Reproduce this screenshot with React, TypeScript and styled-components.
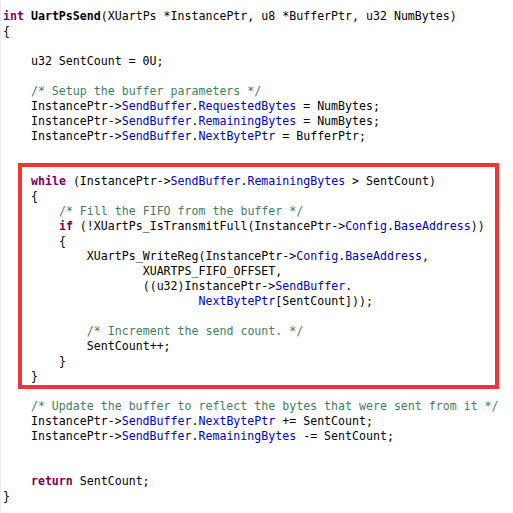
import React from "react";
import styled, { createGlobalStyle } from "styled-components";

const Global = createGlobalStyle`
  html, body { margin: 0; padding: 0; background: #ffffff; }
  #root { width: 513px; height: 513px; }
`;

const Page = styled.div`
  box-sizing: border-box;
  width: 513px;
  height: 513px;
  background: #ffffff;
  border-left: 1px solid #ececec;
  padding: 9px 0 0 2px;
  font-family: "DejaVu Sans Mono", "Liberation Mono", monospace;
  font-size: 11.6px;
  line-height: 15px;
  color: #000000;
  overflow: hidden;
`;

const Line = styled.div`
  height: 15px;
  white-space: pre;
`;

const Highlight = styled.div`
  box-sizing: border-box;
  width: 481px;
  margin: 4px 0 10px 15px;
  border: 4px solid #ef3535;
  padding: 7px 0 1px 9px;
`;

const Kw = styled.span`
  color: #7f0055;
  font-weight: bold;
`;

const Fn = styled.span`
  font-weight: bold;
`;

const Field = styled.span`
  color: #0000c0;
`;

const Comment = styled.span`
  color: #3f7f5f;
`;

type Seg = [string, string];
type Row = Seg[];

const t = (s: string): Seg => ["t", s];
const k = (s: string): Seg => ["k", s];
const f = (s: string): Seg => ["f", s];
const c = (s: string): Seg => ["c", s];
const b = (s: string): Seg => ["b", s];

const before: Row[] = [
  [k("int"), t(" "), b("UartPsSend"), t("(XUartPs *InstancePtr, u8 *BufferPtr, u32 NumBytes)")],
  [t("{")],
  [],
  [t("    u32 SentCount = 0U;")],
  [],
  [t("    "), c("/* Setup the buffer parameters */")],
  [t("    InstancePtr->"), f("SendBuffer"), t("."), f("RequestedBytes"), t(" = NumBytes;")],
  [t("    InstancePtr->"), f("SendBuffer"), t("."), f("RemainingBytes"), t(" = NumBytes;")],
  [t("    InstancePtr->"), f("SendBuffer"), t("."), f("NextBytePtr"), t(" = BufferPtr;")],
  [],
];

const boxed: Row[] = [
  [k("while"), t(" (InstancePtr->"), f("SendBuffer"), t("."), f("RemainingBytes"), t(" > SentCount)")],
  [t("{")],
  [t("    "), c("/* Fill the FIFO from the buffer */")],
  [t("    "), k("if"), t(" (!XUartPs_IsTransmitFull(InstancePtr->"), f("Config"), t("."), f("BaseAddress"), t("))")],
  [t("    {")],
  [t("        XUartPs_WriteReg(InstancePtr->"), f("Config"), t("."), f("BaseAddress"), t(",")],
  [t("                XUARTPS_FIFO_OFFSET,")],
  [t("                ((u32)InstancePtr->"), f("SendBuffer"), t(".")],
  [t("                        "), f("NextBytePtr"), t("[SentCount]));")],
  [],
  [t("        "), c("/* Increment the send count. */")],
  [t("        SentCount++;")],
  [t("    }")],
  [t("}")],
];

const after: Row[] = [
  [t("    "), c("/* Update the buffer to reflect the bytes that were sent from it */")],
  [t("    InstancePtr->"), f("SendBuffer"), t("."), f("NextBytePtr"), t(" += SentCount;")],
  [t("    InstancePtr->"), f("SendBuffer"), t("."), f("RemainingBytes"), t(" -= SentCount;")],
  [],
  [],
  [t("    "), k("return"), t(" SentCount;")],
  [t("}")],
];

function renderSeg([kind, text]: Seg, i: number) {
  switch (kind) {
    case "k":
      return <Kw key={i}>{text}</Kw>;
    case "f":
      return <Field key={i}>{text}</Field>;
    case "c":
      return <Comment key={i}>{text}</Comment>;
    case "b":
      return <Fn key={i}>{text}</Fn>;
    default:
      return <React.Fragment key={i}>{text}</React.Fragment>;
  }
}

function Lines({ rows }: { rows: Row[] }) {
  return (
    <>
      {rows.map((r, i) => (
        <Line key={i}>{r.length ? r.map(renderSeg) : " "}</Line>
      ))}
    </>
  );
}

export default function App() {
  return (
    <>
      <Global />
      <Page>
        <Lines rows={before} />
        <Highlight>
          <Lines rows={boxed} />
        </Highlight>
        <Lines rows={after} />
      </Page>
    </>
  );
}
